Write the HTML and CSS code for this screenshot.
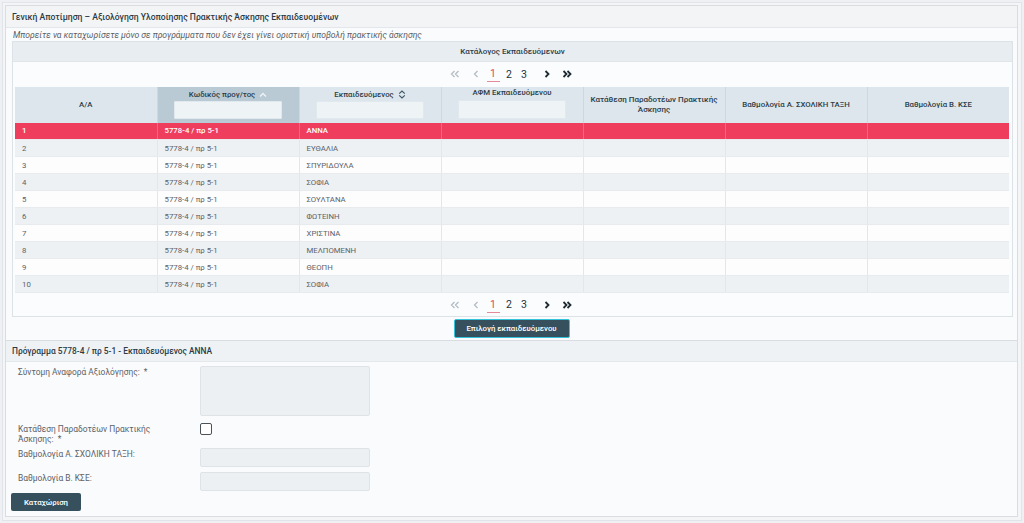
FILE: index.html
```html
<!DOCTYPE html>
<html lang="el">
<head>
<meta charset="utf-8">
<title>Αξιολόγηση</title>
<link rel="stylesheet" href="styles.css">
</head>
<body>
<div class="frame">
  <div class="panel">
    <div class="panel-title">Γενική Αποτίμηση – Αξιολόγηση Υλοποίησης Πρακτικής Άσκησης Εκπαιδευομένων</div>
    <div class="panel-note">Μπορείτε να καταχωρίσετε μόνο σε προγράμματα που δεν έχει γίνει οριστική υποβολή πρακτικής άσκησης</div>

    <div class="card">
      <div class="card-head">Κατάλογος Εκπαιδευόμενων</div>
      <div class="pager">
        <span class="pg dis"><svg width="10" height="8" viewBox="0 0 10 8"><path d="M4.5 1 L1.5 4 L4.5 7 M8.5 1 L5.5 4 L8.5 7" fill="none" stroke="currentColor" stroke-width="1.3"/></svg></span>
        <span class="pg dis"><svg width="6" height="8" viewBox="0 0 6 8"><path d="M4.5 1 L1.5 4 L4.5 7" fill="none" stroke="currentColor" stroke-width="1.3"/></svg></span>
        <span class="pg num active">1</span>
        <span class="pg num">2</span>
        <span class="pg num">3</span>
        <span class="pg nav"><svg width="6" height="8" viewBox="0 0 6 8"><path d="M1.5 1 L4.5 4 L1.5 7" fill="none" stroke="currentColor" stroke-width="1.8"/></svg></span>
        <span class="pg nav"><svg width="10" height="8" viewBox="0 0 10 8"><path d="M1.5 1 L4.5 4 L1.5 7 M5.5 1 L8.5 4 L5.5 7" fill="none" stroke="currentColor" stroke-width="1.8"/></svg></span>
      </div>
      <table class="grid">
        <thead>
          <tr>
            <th>Α/Α</th>
            <th class="sorted">
              <div class="th-t">Κωδικός προγ/τος <svg class="sort" width="8" height="6" viewBox="0 0 8 6"><path d="M1 4.5 L4 1.5 L7 4.5" fill="none" stroke="#eef3f6" stroke-width="1.4"/></svg></div>
              <div class="filter"></div>
            </th>
            <th class="filt">
              <div class="th-t">Εκπαιδευόμενος <svg class="sort" width="8" height="9" viewBox="0 0 8 9"><path d="M1.2 3.6 L4 1 L6.8 3.6 M1.2 5.4 L4 8 L6.8 5.4" fill="none" stroke="#3d5563" stroke-width="1.1"/></svg></div>
              <div class="filter"></div>
            </th>
            <th class="top">
              <div class="th-t">ΑΦΜ Εκπαιδευόμενου</div>
              <div class="filter"></div>
            </th>
            <th class="wide">Κατάθεση Παραδοτέων Πρακτικής Άσκησης</th>
            <th>Βαθμολογία Α. ΣΧΟΛΙΚΗ ΤΑΞΗ</th>
            <th>Βαθμολογία Β. ΚΣΕ</th>
          </tr>
        </thead>
        <tbody>
          <tr class="sel"><td>1</td><td>5778-4 / πρ 5-1</td><td>ΑΝΝΑ</td><td></td><td></td><td></td><td></td></tr>
          <tr><td>2</td><td>5778-4 / πρ 5-1</td><td>ΕΥΘΑΛΙΑ</td><td></td><td></td><td></td><td></td></tr>
          <tr><td>3</td><td>5778-4 / πρ 5-1</td><td>ΣΠΥΡΙΔΟΥΛΑ</td><td></td><td></td><td></td><td></td></tr>
          <tr><td>4</td><td>5778-4 / πρ 5-1</td><td>ΣΟΦΙΑ</td><td></td><td></td><td></td><td></td></tr>
          <tr><td>5</td><td>5778-4 / πρ 5-1</td><td>ΣΟΥΛΤΑΝΑ</td><td></td><td></td><td></td><td></td></tr>
          <tr><td>6</td><td>5778-4 / πρ 5-1</td><td>ΦΩΤΕΙΝΗ</td><td></td><td></td><td></td><td></td></tr>
          <tr><td>7</td><td>5778-4 / πρ 5-1</td><td>ΧΡΙΣΤΙΝΑ</td><td></td><td></td><td></td><td></td></tr>
          <tr><td>8</td><td>5778-4 / πρ 5-1</td><td>ΜΕΛΠΟΜΕΝΗ</td><td></td><td></td><td></td><td></td></tr>
          <tr><td>9</td><td>5778-4 / πρ 5-1</td><td>ΘΕΟΠΗ</td><td></td><td></td><td></td><td></td></tr>
          <tr><td>10</td><td>5778-4 / πρ 5-1</td><td>ΣΟΦΙΑ</td><td></td><td></td><td></td><td></td></tr>
        </tbody>
      </table>
      <div class="pager bottom">
        <span class="pg dis"><svg width="10" height="8" viewBox="0 0 10 8"><path d="M4.5 1 L1.5 4 L4.5 7 M8.5 1 L5.5 4 L8.5 7" fill="none" stroke="currentColor" stroke-width="1.3"/></svg></span>
        <span class="pg dis"><svg width="6" height="8" viewBox="0 0 6 8"><path d="M4.5 1 L1.5 4 L4.5 7" fill="none" stroke="currentColor" stroke-width="1.3"/></svg></span>
        <span class="pg num active">1</span>
        <span class="pg num">2</span>
        <span class="pg num">3</span>
        <span class="pg nav"><svg width="6" height="8" viewBox="0 0 6 8"><path d="M1.5 1 L4.5 4 L1.5 7" fill="none" stroke="currentColor" stroke-width="1.8"/></svg></span>
        <span class="pg nav"><svg width="10" height="8" viewBox="0 0 10 8"><path d="M1.5 1 L4.5 4 L1.5 7 M5.5 1 L8.5 4 L5.5 7" fill="none" stroke="currentColor" stroke-width="1.8"/></svg></span>
      </div>
    </div>

    <div class="select-row">
      <button class="btn btn-focus">Επιλογή εκπαιδευόμενου</button>
    </div>

    <div class="section-head">Πρόγραμμα 5778-4 / πρ 5-1 - Εκπαιδευόμενος ΑΝΝΑ</div>
    <div class="form">
      <div class="frow r-text">
        <label class="lbl">Σύντομη Αναφορά Αξιολόγησης: &nbsp;*</label>
        <div class="textarea"></div>
      </div>
      <div class="frow r-check">
        <label class="lbl">Κατάθεση Παραδοτέων Πρακτικής<br>Άσκησης: &nbsp;*</label>
        <div class="check"></div>
      </div>
      <div class="frow r-input">
        <label class="lbl">Βαθμολογία Α. ΣΧΟΛΙΚΗ ΤΑΞΗ:</label>
        <div class="input"></div>
      </div>
      <div class="frow r-input">
        <label class="lbl">Βαθμολογία Β. ΚΣΕ:</label>
        <div class="input"></div>
      </div>
      <button class="btn btn-save">Καταχώριση</button>
    </div>
  </div>
</div>
</body>
</html>
```

FILE: styles.css
```css
* { box-sizing: border-box; }
html, body { margin: 0; padding: 0; }
body {
  background: #eef0f3;
  font-family: Roboto, "Noto Sans", "DejaVu Sans", sans-serif;
  color: #4a4f55;
  width: 1024px;
  height: 523px;
  overflow: hidden;
}
.frame {
  margin: 2px 2px 0 2px;
  height: 519px;
  border: 1px solid #e1e4e8;
  background: #f4f5f7;
  padding: 2px 3px 2px 2px;
}
.panel {
  height: 512px;
  border: 1px solid #d9dde2;
  background: #fafbfc;
  padding: 0 4px 0 6px;
}
.panel-title {
  height: 22px;
  margin: 0 -4px 0 -6px;
  padding: 0 6px;
  background: #f2f4f6;
  border-bottom: 1px solid #e3e6ea;
  font-size: 8.6px;
  font-weight: 500;
  color: #2a3a46;
  display: flex;
  align-items: center;
}
.panel-note {
  height: 13px;
  font-size: 8.6px;
  font-style: italic;
  color: #5a5f66;
  display: flex;
  align-items: center;
  padding-left: 1px;
}
.card {
  border: 1px solid #dde2e7;
  background: #fbfcfd;
  padding: 0 2px 0 2px;
  height: 276px;
  display: flex;
  flex-direction: column;
}
.card-head {
  height: 20px;
  margin: 0 -2px;
  background: #e8edf1;
  border-bottom: 1px solid #e0e5ea;
  font-size: 8px;
  font-weight: 500;
  color: #2f3e4a;
  display: flex;
  align-items: center;
  justify-content: center;
}
.pager {
  height: 25px;
  display: flex;
  align-items: center;
  justify-content: center;
  padding-right: 4px;
  color: #25323b;
}
.pager.bottom { height: 23px; }
.pg {
  display: flex;
  align-items: center;
  justify-content: center;
  font-size: 10.5px;
  height: 16px;
}
.pg.dis { color: #b3bcc5; width: 21px; }
.pg.num { width: 15px; color: #25323b; }
.pg.active {
  color: #e0465f;
  border-bottom: 1.5px solid #e58a98;
  width: 13px;
  margin-right: 2px;
}
.pg.nav { width: 20px; color: #1f2b33; }
.pg.num + .pg.nav { margin-left: 5px; }

.grid {
  width: 994px;
  table-layout: fixed;
  border-collapse: collapse;
  font-size: 7.8px;
}
.grid th {
  background: #dce6ec;
  height: 36px;
  font-weight: 500;
  color: #2c3d49;
  text-align: center;
  vertical-align: middle;
  border-right: 1px solid #ccd8e0;
  padding: 0 4px;
  line-height: 10px;
}
.grid th:last-child { border-right: none; }
.grid th.sorted { background: #b9cad4; }
.grid th.sorted, .grid th.filt, .grid th.top {
  vertical-align: top;
  padding: 3px 16px 0 16px;
}
.grid th.top { padding-top: 1px; }
.grid th.wide { font-size: 8px; }
.th-t {
  display: flex;
  align-items: center;
  justify-content: center;
  gap: 4px;
  height: 10px;
}
.filter {
  margin: 1px auto 0 auto;
  height: 18px;
  width: 108px;
  background: #eef3f6;
  border: 1px solid #e2e9ee;
  border-radius: 1px;
}
.grid th.top .filter { height: 19px; margin-top: 2px; }
.grid td {
  height: 17px;
  padding: 0 7px;
  color: #5b6168;
  border-right: 1px solid #e3e7eb;
  border-bottom: 1px solid #e8ebee;
  white-space: nowrap;
  overflow: hidden;
}
.grid td:last-child { border-right: none; }
.grid tbody tr { background: #fdfdfe; }
.grid tbody tr:nth-child(even) { background: #eef1f4; }
.grid tbody tr.sel { background: #ef3e5d; }
.grid tbody tr.sel td { color: #ffffff; font-weight: 500; border-right-color: #f06a80; }

.select-row {
  height: 24px;
  display: flex;
  justify-content: center;
  align-items: center;
  padding-right: 0;
  margin: 0 -4px 0 -6px;
  border-bottom: 1px solid #d9dde2;
}
.btn {
  font-family: inherit;
  font-size: 7.8px;
  color: #ffffff;
  background: #36515d;
  border: none;
  border-radius: 2px;
  cursor: pointer;
}
.btn-focus {
  width: 116px;
  height: 19px;
  border: 1.5px solid #33c3da;
  font-weight: 500;
}
.section-head {
  height: 21px;
  margin: 0 -4px 0 -6px;
  padding: 0 6px;
  background: #eff2f5;
  border-bottom: 1px solid #e5e8eb;
  font-size: 8.4px;
  font-weight: 500;
  color: #2a3a46;
  display: flex;
  align-items: center;
}
.form {
  padding-top: 4px;
  display: flex;
  flex-direction: column;
}
.frow {
  display: flex;
  padding-left: 6px;
}
.lbl {
  width: 182px;
  font-size: 8.4px;
  line-height: 10px;
  color: #5c6269;
}
.r-text { height: 57px; }
.r-text .lbl { padding-top: 1px; }
.textarea {
  width: 170px;
  height: 50px;
  background: #edf0f3;
  border: 1px solid #dfe3e7;
  border-radius: 2px;
}
.r-check { height: 25px; align-items: flex-start; }
.r-check .lbl { padding-top: 1px; }
.check {
  width: 12px;
  height: 12px;
  border: 1.3px solid #4a5258;
  border-radius: 2px;
  background: #ffffff;
}
.r-input { height: 24px; }
.r-input .lbl { padding-top: 1px; }
.input {
  width: 170px;
  height: 19px;
  background: #edf0f3;
  border: 1px solid #dfe3e7;
  border-radius: 2px;
}
.btn-save {
  margin-top: -3px;
  width: 70px;
  height: 18px;
  font-weight: 500;
  align-self: flex-start;
  margin-left: -1px;
}
```
